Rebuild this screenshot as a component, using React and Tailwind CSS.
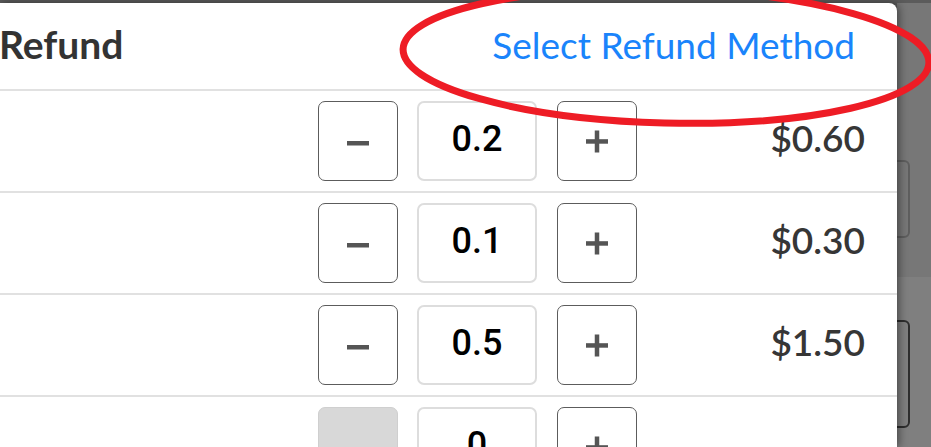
import React from "react";

const rows = [
  { value: "0.2", price: "$0.60", disabled: false },
  { value: "0.1", price: "$0.30", disabled: false },
  { value: "0.5", price: "$1.50", disabled: false },
  { value: "0", price: "", disabled: true },
];

function Minus() {
  return (
    <svg width="24" height="24" viewBox="0 0 24 24" className="block">
      <rect x="1" y="12" width="22" height="4.5" fill="#555555" />
    </svg>
  );
}

function Plus() {
  return (
    <svg width="24" height="24" viewBox="0 0 24 24" className="block">
      <rect x="1" y="10.2" width="22" height="4.5" fill="#555555" />
      <rect x="9.75" y="1.5" width="4.5" height="22" fill="#555555" />
    </svg>
  );
}

export default function App() {
  return (
    <div
      className="relative flex w-[931px] h-[447px] overflow-hidden bg-[#5b5b5b]"
      style={{ fontFamily: "Lato, 'Noto Sans', sans-serif" }}
    >
      {/* Panel */}
      <div className="relative z-10 mt-[3px] w-[897px] shrink-0 bg-white rounded-tr-[8px] shadow-[2px_0_8px_rgba(0,0,0,0.45)]">
        <div className="flex h-[88px] items-center justify-between border-b-2 border-[#e1e1e1] pr-[42px]">
          <div className="text-[39px] font-bold text-[#333333] leading-none -ml-[1px] pb-[3px]">Refund</div>
          <div className="text-[37px] text-[#1a84fb] leading-none pb-[3px]">Select Refund Method</div>
        </div>
        {rows.map((r, i) => (
          <div
            key={i}
            className="flex h-[102px] items-center border-b-2 border-[#e1e1e1] pl-[318px] pr-[32px]"
          >
            <div
              className={
                r.disabled
                  ? "flex h-[80px] w-[80px] items-center justify-center rounded-[7px] border border-[#cfcfcf] bg-[#d8d8d8]"
                  : "flex h-[80px] w-[80px] items-center justify-center rounded-[7px] border border-[#5c5c5c] bg-white"
              }
            >
              {!r.disabled && <Minus />}
            </div>
            <div className="ml-[19px] flex h-[80px] w-[120px] items-center justify-center rounded-[7px] border-2 border-[#dddddd] bg-white">
              <span
                className="text-[36px] font-medium text-black leading-none pb-[5px]"
                style={{ fontFamily: "Roboto, 'Liberation Sans', sans-serif" }}
              >
                {r.value}
              </span>
            </div>
            <div className="ml-[20px] flex h-[80px] w-[80px] items-center justify-center rounded-[7px] border border-[#5c5c5c] bg-white">
              <Plus />
            </div>
            <div className="flex-1 text-right text-[37px] font-semibold text-[#363636] leading-none pb-[7px]">
              {r.price}
            </div>
          </div>
        ))}
      </div>

      {/* Right background strip */}
      <div className="flex flex-1 flex-col">
        <div className="h-[3px] bg-[#5b5b5b]" />
        <div className="relative h-[274px] bg-[#777777]">
          <div className="absolute left-[-40px] top-[157px] h-[78px] w-[53px] rounded-[6px] border-2 border-[#5e5e5e]" />
        </div>
        <div className="relative flex-1 bg-[#7f7f7f]">
          <div className="absolute left-[-40px] top-[43px] h-[108px] w-[53px] rounded-[6px] border-2 border-[#2e2e2e]" />
        </div>
      </div>

      {/* Red annotation ellipse */}
      <svg
        className="pointer-events-none absolute left-0 top-0 z-20"
        width="931"
        height="447"
        viewBox="0 0 931 447"
      >
        <ellipse
          cx="666"
          cy="56"
          rx="263"
          ry="67"
          fill="none"
          stroke="#ee1c25"
          strokeWidth="7"
          transform="rotate(1.5 666 56)"
        />
      </svg>
    </div>
  );
}
